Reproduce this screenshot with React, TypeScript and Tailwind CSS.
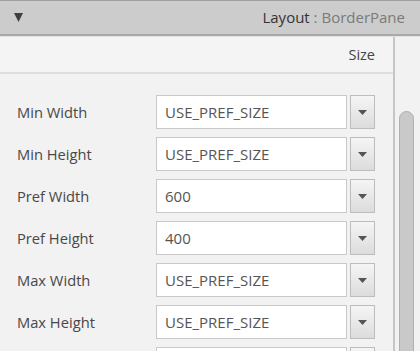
import React from "react";

const rows = [
  { label: "Min Width", value: "USE_PREF_SIZE" },
  { label: "Min Height", value: "USE_PREF_SIZE" },
  { label: "Pref Width", value: "600" },
  { label: "Pref Height", value: "400" },
  { label: "Max Width", value: "USE_PREF_SIZE" },
  { label: "Max Height", value: "USE_PREF_SIZE" },
  { label: "", value: "" },
];

function Tri({ className }: { className?: string }) {
  return (
    <svg viewBox="0 0 10 10" className={className} preserveAspectRatio="none">
      <polygon points="0,0 10,0 5,10" fill="currentColor" />
    </svg>
  );
}

export default function App() {
  return (
    <div
      className="w-[420px] h-[351px] overflow-hidden bg-[#f2f2f2] flex flex-col"
      style={{ fontFamily: "'Open Sans', sans-serif" }}
    >
      <div className="h-[36px] shrink-0 bg-[#cccccc] border-t border-[#a0a0a0] border-b-2 border-b-[#a9a9a9] flex items-center justify-between pl-[14px] pr-[15px]">
        <Tri className="w-[9px] h-[9px] text-[#3f3f3f]" />
        <div className="text-[15px] leading-none">
          <span className="text-[#333333]">Layout</span>
          <span className="text-[#7a7a7a]"> : BorderPane</span>
        </div>
      </div>
      <div className="flex flex-1 min-h-0 border-t border-[#e2e2e2]">
        <div className="w-[395px] shrink-0 border-r-2 border-[#c6c6c6] flex flex-col">
          <div className="h-[37px] shrink-0 border-b-2 border-[#dedede] flex items-center justify-end pr-[18px] text-[14.5px] text-[#444444] bg-[#f4f4f4]">
            Size
          </div>
          <div className="pt-[21px] flex flex-col gap-[8px]">
            {rows.map((r, i) => (
              <div key={i} className="flex items-center h-[34px] shrink-0">
                <div className="w-[156px] pl-[17px] text-[14.7px] text-[#484848]">{r.label}</div>
                <div className="w-[191px] h-[34px] bg-white border border-[#c9c9c9] flex items-center pl-[8px] text-[15px] text-[#555555]">
                  {r.value}
                </div>
                <div className="ml-[3px] w-[25px] h-[34px] border border-[#bdbdbd] bg-gradient-to-b from-[#f5f5f5] to-[#dcdcdc] flex items-center justify-center">
                  <Tri className="w-[9px] h-[5px] text-[#555555]" />
                </div>
              </div>
            ))}
          </div>
        </div>
        <div className="flex-1 pt-[74px] pl-[4px]">
          <div className="w-[15px] h-[300px] rounded-t-full bg-[#c9c9c9] border border-[#b0b0b0]" />
        </div>
      </div>
    </div>
  );
}
